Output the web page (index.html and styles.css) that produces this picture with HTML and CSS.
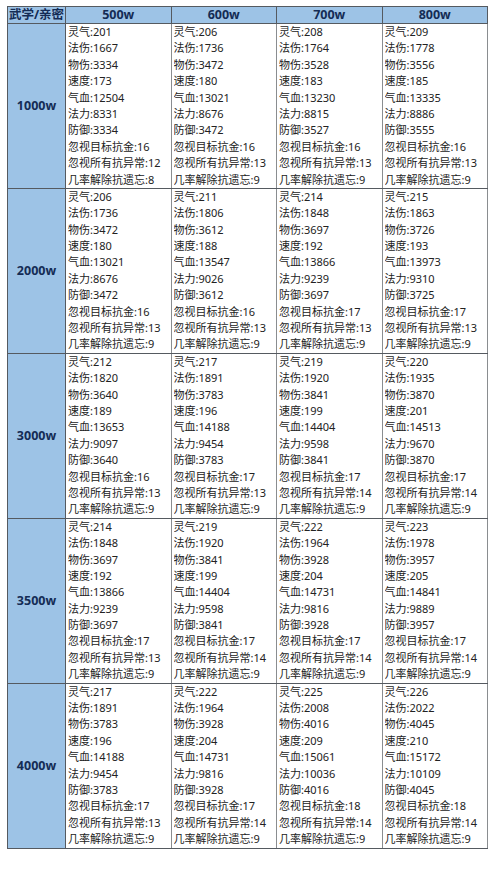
FILE: index.html
```html
<!DOCTYPE html>
<html lang="zh">
<head>
<meta charset="utf-8">
<link rel="stylesheet" href="styles.css">
</head>
<body>
<div class="wrap">
<table class="grid">
<colgroup><col class="c0"><col class="c1"><col class="c1"><col class="c1"><col class="c1"></colgroup>
<thead>
<tr><th class="corner">武学/亲密</th><th>500w</th><th>600w</th><th>700w</th><th>800w</th></tr>
</thead>
<tbody id="body"></tbody>
</table>
</div>
<script src="app.js"></script>
</body>
</html>
```

FILE: app.js
```js
const rows = [
  ["1000w", [
    [201,1667,3334,173,12504,8331,3334,16,12,8],
    [206,1736,3472,180,13021,8676,3472,16,13,9],
    [208,1764,3528,183,13230,8815,3527,16,13,9],
    [209,1778,3556,185,13335,8886,3555,16,13,9]]],
  ["2000w", [
    [206,1736,3472,180,13021,8676,3472,16,13,9],
    [211,1806,3612,188,13547,9026,3612,16,13,9],
    [214,1848,3697,192,13866,9239,3697,17,13,9],
    [215,1863,3726,193,13973,9310,3725,17,13,9]]],
  ["3000w", [
    [212,1820,3640,189,13653,9097,3640,16,13,9],
    [217,1891,3783,196,14188,9454,3783,17,13,9],
    [219,1920,3841,199,14404,9598,3841,17,14,9],
    [220,1935,3870,201,14513,9670,3870,17,14,9]]],
  ["3500w", [
    [214,1848,3697,192,13866,9239,3697,17,13,9],
    [219,1920,3841,199,14404,9598,3841,17,14,9],
    [222,1964,3928,204,14731,9816,3928,17,14,9],
    [223,1978,3957,205,14841,9889,3957,17,14,9]]],
  ["4000w", [
    [217,1891,3783,196,14188,9454,3783,17,13,9],
    [222,1964,3928,204,14731,9816,3928,17,14,9],
    [225,2008,4016,209,15061,10036,4016,18,14,9],
    [226,2022,4045,210,15172,10109,4045,18,14,9]]]
];
const labels = ["灵气","法伤","物伤","速度","气血","法力","防御","忽视目标抗金","忽视所有抗异常","几率解除抗遗忘"];
const tb = document.getElementById("body");
for (const [name, cols] of rows) {
  const tr = document.createElement("tr");
  const th = document.createElement("th");
  th.className = "rowhead";
  th.textContent = name;
  tr.appendChild(th);
  for (const vals of cols) {
    const td = document.createElement("td");
    vals.forEach((v, i) => {
      const d = document.createElement("div");
      d.className = "line";
      d.textContent = labels[i] + ":" + v;
      td.appendChild(d);
    });
    tr.appendChild(td);
  }
  tb.appendChild(tr);
}
```

FILE: styles.css
```css
html, body {
  margin: 0;
  padding: 0;
  background: #ffffff;
}
body {
  font-family: "Noto Sans", "Noto Sans CJK SC", sans-serif;
  color: #222222;
}
.wrap {
  padding: 6px 0 0 7px;
}
.grid {
  border-collapse: collapse;
  table-layout: fixed;
  width: 480px;
  border: 1px solid #555a60;
}
.c0 { width: 58px; }
.c1 { width: 105.5px; }
.grid th {
  background: #9dc3e6;
  color: #142c55;
  font-family: "Open Sans", "Noto Sans CJK SC", sans-serif;
  font-weight: 700;
  font-size: 12.5px;
  text-align: center;
  padding: 0;
  border: 1px solid #555a60;
}
thead th {
  height: 16px;
  line-height: 16px;
}
.grid td {
  vertical-align: top;
  padding: 0 0 0 2px;
  border-left: 1px solid #8a8d90;
  border-right: 1px solid #8a8d90;
  border-top: 1px solid #555a60;
  border-bottom: 1px solid #555a60;
}
.line {
  font-size: 11px;
  line-height: 16.4px;
  height: 16.4px;
  white-space: nowrap;
  overflow: hidden;
}
.rowhead {
  vertical-align: middle;
}
```
